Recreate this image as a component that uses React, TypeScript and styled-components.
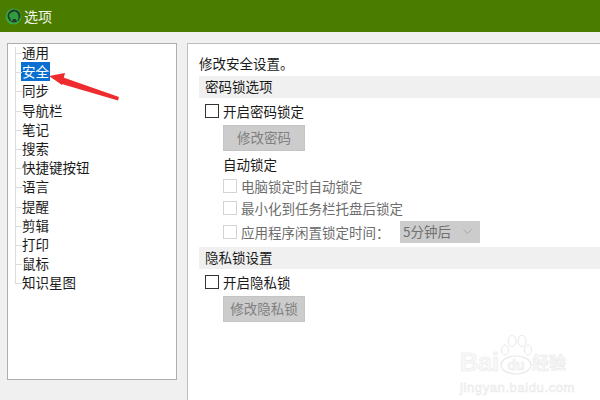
import styled, { createGlobalStyle } from "styled-components";

const GlobalStyle = createGlobalStyle`
  html, body {
    margin: 0;
    padding: 0;
    background: #f0f0f0;
  }
  * {
    box-sizing: border-box;
  }
  body {
    font-family: "Noto Sans CJK SC", "Liberation Sans", sans-serif;
    font-size: 13.5px;
    color: #1a1a1a;
  }
`;

const Page = styled.div`
  position: relative;
  width: 600px;
  height: 400px;
  overflow: hidden;
  background: #f0f0f0;
`;

const TitleBar = styled.div`
  height: 32px;
  background: #4a7c00;
  display: flex;
  align-items: center;
  gap: 2px;
  padding-left: 5px;
  color: #f2f6ea;
  font-size: 14px;
`;

const Body = styled.div`
  display: flex;
  padding: 11px 0 0 7px;
  gap: 10px;
  height: 368px;
`;

const TreePanel = styled.div`
  width: 170px;
  height: 337px;
  border: 1px solid #aeaeae;
  background: #fff;
  padding: 0 0 0 14px;
  flex: none;
`;

const TreeRow = styled.div<{ $first?: boolean }>`
  position: relative;
  height: 19.2px;
  display: flex;
  align-items: center;

  &::before {
    content: "";
    position: absolute;
    left: -7px;
    top: ${(p) => (p.$first ? "3px" : "-10px")};
    height: ${(p) => (p.$first ? "7px" : "20px")};
    border-left: 1px solid #dcdcdc;
  }
  &::after {
    content: "";
    position: absolute;
    left: -7px;
    width: 7px;
    top: 9px;
    border-top: 1px solid #dcdcdc;
  }
`;

const TreeLabel = styled.span<{ $selected?: boolean }>`
  background: ${(p) => (p.$selected ? "#0b6fd1" : "transparent")};
  color: ${(p) => (p.$selected ? "#fff" : "#1a1a1a")};
  height: 19px;
  line-height: 18px;
  margin: -2px 0 0 -1px;
  padding: 0 1px;
`;

const Settings = styled.div`
  flex: 1;
  border: 1px solid #bdbdbd;
  border-right: 0;
  border-bottom: 0;
  background: #fff;
  padding: 10px 0 0 11px;
  height: 357px;
`;

const Intro = styled.div`
  height: 22px;
  line-height: 18px;
`;

const SectionBar = styled.div<{ $spaced?: boolean }>`
  height: 22px;
  line-height: 20px;
  background: #f0f0f0;
  padding-left: 6px;
  margin-top: ${(p) => (p.$spaced ? "3px" : "0")};
`;

const CheckRow = styled.label<{ $disabled?: boolean; $indent?: boolean; $gapBefore?: boolean }>`
  display: flex;
  align-items: center;
  gap: 4px;
  margin-left: ${(p) => (p.$indent ? "24px" : "6px")};
  margin-top: ${(p) => (p.$gapBefore ? "2px" : "0")};
  height: ${(p) => (p.$disabled ? "22px" : "27px")};
  padding-bottom: 2px;
  color: ${(p) => (p.$disabled ? "#6d6d6d" : "#1a1a1a")};
`;

const Box = styled.span<{ $disabled?: boolean }>`
  width: 14px;
  height: 14px;
  flex: none;
  background: #fff;
  border: 1px solid ${(p) => (p.$disabled ? "#d4d4d4" : "#333")};
`;

const GrayButton = styled.div`
  width: 82px;
  height: 26px;
  margin-left: 24px;
  padding-bottom: 2px;
  background: #cccccc;
  border: 1px solid #c4c4c4;
  color: #808080;
  display: flex;
  align-items: center;
  justify-content: center;
`;

const SubHeading = styled.div`
  margin: 2px 0 0 24px;
  height: 23px;
  line-height: 23px;
`;

const Combo = styled.div`
  width: 80px;
  height: 22px;
  flex: none;
  padding: 0 8px 2px 3px;
  background: #cccccc;
  color: #707070;
  display: flex;
  align-items: center;
  justify-content: space-between;
`;

const DisabledText = styled.span`
  width: 155px;
  flex: none;
`;

const Watermark = styled.div`
  position: absolute;
  left: 460px;
  top: 335px;
  width: 108px;
  color: #f8f8f8;
  -webkit-text-stroke: 0.5px #e8e8e8;
  font-family: "Liberation Sans", sans-serif;
`;

const WatermarkTop = styled.div`
  display: flex;
  align-items: flex-end;
  font-size: 25px;
  font-weight: 700;
  line-height: 26px;
`;

const WatermarkCn = styled.span`
  font-family: "Noto Sans CJK SC", sans-serif;
  font-size: 17px;
  line-height: 26px;
`;

const WatermarkUrl = styled.div`
  font-size: 13px;
  line-height: 14px;
  letter-spacing: 0.6px;
  margin-top: 6px;
  white-space: nowrap;
`;

const Overlay = styled.svg`
  position: absolute;
  left: 0;
  top: 0;
  pointer-events: none;
`;

const treeItems = [
  "通用",
  "安全",
  "同步",
  "导航栏",
  "笔记",
  "搜索",
  "快捷键按钮",
  "语言",
  "提醒",
  "剪辑",
  "打印",
  "鼠标",
  "知识星图",
];

function AppLogo() {
  return (
    <svg width="17" height="17" viewBox="0 0 17 17">
      <circle cx="8.5" cy="8.5" r="8" fill="#35a843" />
      <circle cx="9" cy="8" r="6.5" fill="#26382a" />
      <path
        d="M4.5 6 Q7 3 10 3.5 Q13.5 4.5 13.5 9 Q13.5 12.5 11.5 13 L10.5 11 L8 11 L7.5 13 L5.8 12.5 Q5.5 9.5 4 8.5 Z"
        fill="#2f9e3f"
      />
    </svg>
  );
}

function Paw() {
  return (
    <svg width="33" height="40" viewBox="0 0 33 40">
      <ellipse cx="17" cy="30" rx="15" ry="9" fill="none" stroke="#e8e8e8" strokeWidth="1.2" />
      <ellipse cx="6" cy="15" rx="3.5" ry="5" fill="none" stroke="#e8e8e8" />
      <ellipse cx="13" cy="6" rx="4" ry="5.5" fill="none" stroke="#e8e8e8" />
      <ellipse cx="23" cy="6" rx="4" ry="5.5" fill="none" stroke="#e8e8e8" />
      <ellipse cx="29" cy="15" rx="3.5" ry="5" fill="none" stroke="#e8e8e8" />
      <text x="17" y="35" fontSize="14" fontWeight="700" textAnchor="middle" fill="#f8f8f8" stroke="#e8e8e8" strokeWidth="0.5">
        du
      </text>
    </svg>
  );
}

export default function App() {
  return (
    <Page>
      <GlobalStyle />
      <TitleBar>
        <AppLogo />
        选项
      </TitleBar>
      <Body>
        <TreePanel>
          {treeItems.map((item, i) => (
            <TreeRow key={item} $first={i === 0}>
              <TreeLabel $selected={item === "安全"}>{item}</TreeLabel>
            </TreeRow>
          ))}
        </TreePanel>
        <Settings>
          <Intro>修改安全设置。</Intro>
          <SectionBar>密码锁选项</SectionBar>
          <CheckRow>
            <Box />
            开启密码锁定
          </CheckRow>
          <GrayButton>修改密码</GrayButton>
          <SubHeading>自动锁定</SubHeading>
          <CheckRow $indent $disabled>
            <Box $disabled />
            电脑锁定时自动锁定
          </CheckRow>
          <CheckRow $indent $disabled>
            <Box $disabled />
            最小化到任务栏托盘后锁定
          </CheckRow>
          <CheckRow $indent $disabled $gapBefore>
            <Box $disabled />
            <DisabledText>应用程序闲置锁定时间：</DisabledText>
            <Combo>
              5分钟后
              <svg width="9" height="5" viewBox="0 0 9 5">
                <path d="M0.5 0.5 L4.5 4.5 L8.5 0.5" fill="none" stroke="#a8a8a8" />
              </svg>
            </Combo>
          </CheckRow>
          <SectionBar $spaced>隐私锁设置</SectionBar>
          <CheckRow>
            <Box />
            开启隐私锁
          </CheckRow>
          <GrayButton>修改隐私锁</GrayButton>
        </Settings>
      </Body>
      <Overlay width="600" height="400" viewBox="0 0 600 400">
        <path d="M119 97 L118 100.5 L60 83.5 L62 77 Z" fill="#ee2b2f" />
        <path d="M49 76 L65 73 L62 85 Z" fill="#ee2b2f" />
      </Overlay>
      <Watermark>
        <WatermarkTop>
          Bai
          <Paw />
          <WatermarkCn>经验</WatermarkCn>
        </WatermarkTop>
        <WatermarkUrl>jingyan.baidu.com</WatermarkUrl>
      </Watermark>
    </Page>
  );
}
